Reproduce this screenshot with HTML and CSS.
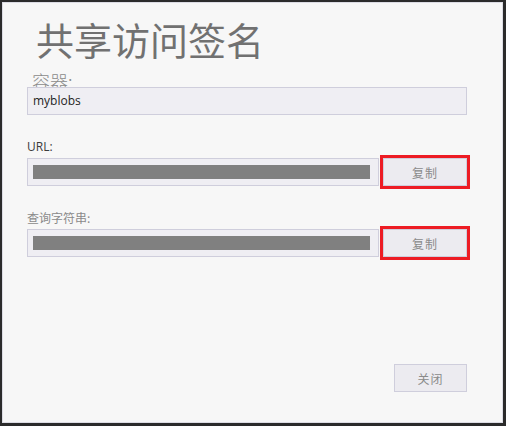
FILE: index.html
```html
<!DOCTYPE html>
<html lang="zh-CN">
<head>
    <meta charset="UTF-8">
    <meta name="viewport" content="width=device-width, initial-scale=1.0">
    <title>共享访问签名</title>
    <link rel="stylesheet" href="styles.css">
</head>
<body>

    <div class="dialog">
        <h1 class="title">共享访问签名</h1>

        <div class="container-label">容器:</div>
        <div class="textbox">myblobs</div>

        <div class="field-label latin">URL:</div>
        <div class="row">
            <div class="textbox short"><span class="masked"></span></div>
            <div class="highlight"><button class="btn">复制</button></div>
        </div>

        <div class="field-label">查询字符串:</div>
        <div class="row">
            <div class="textbox short"><span class="masked"></span></div>
            <div class="highlight"><button class="btn">复制</button></div>
        </div>

        <div class="footer">
            <button class="btn close">关闭</button>
        </div>
    </div>

</body>
</html>
```

FILE: styles.css
```css
body {
    margin: 0;
    padding: 0;
    background-color: #2b2b2b;
    font-family: "Noto Sans CJK SC", "Noto Sans", sans-serif;
}

.dialog {
    box-sizing: border-box;
    width: 501px;
    height: 421px;
    margin: 2px 0 0 2px;
    padding: 14px 0 30px 24px;
    background: #f7f7f7;
    border: 1px solid #dcdce4;
    display: flex;
    flex-direction: column;
}

.title {
    margin: 0 0 0 9px;
    font-size: 38px;
    line-height: 44px;
    font-weight: normal;
    color: #717171;
}

.container-label {
    margin: 11px 0 -3px 5px;
    font-size: 18px;
    line-height: 18px;
    font-weight: 300;
    color: #8a8a8a;
}

.textbox {
    box-sizing: border-box;
    width: 440px;
    height: 28px;
    padding: 0 8px 0 5px;
    background: #efeef3;
    border: 1px solid #cfcedc;
    font-family: "Open Sans", "Noto Sans CJK SC", sans-serif;
    font-size: 12px;
    line-height: 26px;
    color: #1e1e1e;
    display: flex;
    align-items: center;
}

.textbox.short {
    width: 352px;
}

.masked {
    flex: 1;
    height: 14px;
    background: #808080;
}

.field-label {
    margin-top: 21px;
    font-size: 12px;
    line-height: 16px;
    color: #8a8a8a;
}

.field-label.latin {
    margin-top: 24px;
    font-family: "Open Sans", sans-serif;
    color: #3c3c3c;
}

.row {
    display: flex;
    align-items: center;
}

.highlight {
    box-sizing: border-box;
    width: 90px;
    height: 34px;
    margin-left: 1px;
    border: 3px solid #ed1c24;
}

.btn {
    box-sizing: border-box;
    width: 100%;
    height: 100%;
    margin: 0;
    padding: 0;
    background: #ecebf0;
    border: 1px solid #cfcedc;
    font-family: "Noto Sans CJK SC", sans-serif;
    font-size: 12px;
    color: #8a8a8a;
    letter-spacing: 1px;
}

.footer {
    margin-top: auto;
    display: flex;
    justify-content: flex-end;
    padding-right: 35px;
}

.btn.close {
    width: 73px;
    height: 28px;
}
```
